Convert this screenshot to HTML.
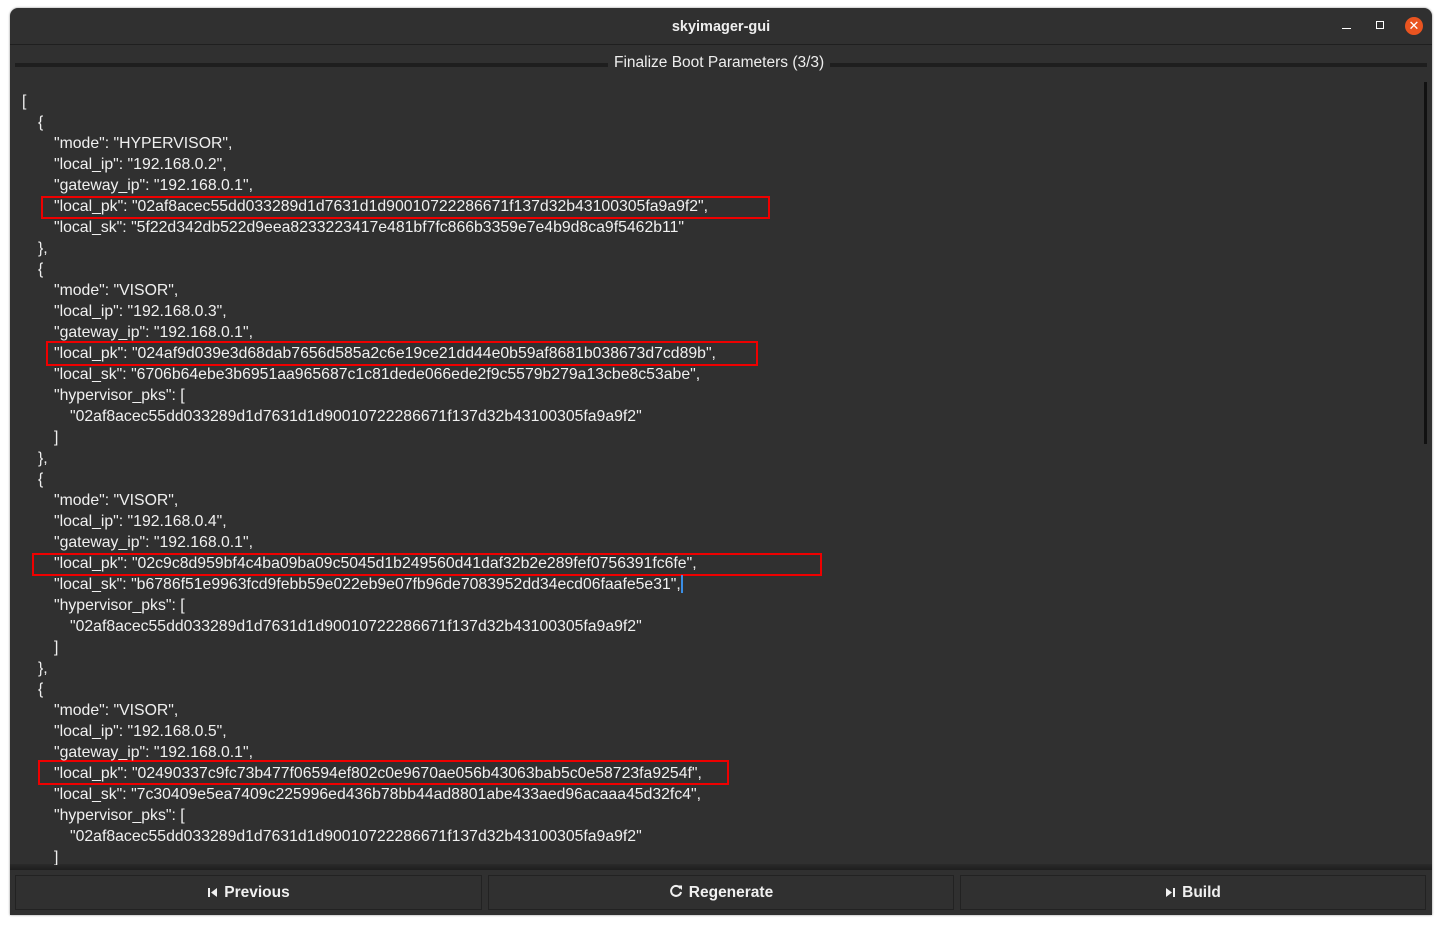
<!DOCTYPE html>
<html><head><meta charset="utf-8"><style>
html,body{margin:0;padding:0;width:1442px;height:925px;background:#fff;overflow:hidden;font-family:"Liberation Sans",sans-serif;}
.win{position:absolute;left:10px;top:8px;width:1422px;height:907px;background:#303030;border-radius:8px 8px 0 0;box-shadow:0 0 2px #888;overflow:hidden;}
.tb{position:absolute;left:0;top:0;width:1422px;height:36px;border-bottom:1px solid #1f1f1f;color:#eee;font-weight:bold;font-size:14.5px;text-align:center;line-height:38px;}
.grp{position:absolute;left:5px;top:55px;width:1412px;height:4px;background:#1e1e1e;}
.gt{position:absolute;left:598px;top:45px;padding:0 6px;background:#303030;color:#eee;font-size:15.5px;line-height:20px;}
.l{position:absolute;color:#f0f0f0;font-size:15.8px;white-space:pre;line-height:21px;}
.box{position:absolute;border:2px solid #e00;box-sizing:border-box;}
.btn{position:absolute;top:867px;height:35px;border:1px solid #222;box-sizing:border-box;color:#f0f0f0;font-weight:bold;font-size:15.5px;text-align:center;line-height:33px;}
.btn svg{vertical-align:-1px;margin-right:6px}
</style></head><body>
<div class="win">
<div class="tb">skyimager-gui</div>
<div style="position:absolute;left:1332px;top:20px;width:9px;height:1px;background:#fff"></div>
<div style="position:absolute;left:1366px;top:13px;width:6px;height:6px;border:1.5px solid #fff"></div>
<div style="position:absolute;left:1395px;top:9px;width:18px;height:18px;border-radius:50%;background:#e95420;color:#fff;font-size:13px;line-height:18px;text-align:center">✕</div>
<div class="grp"></div><div class="gt">Finalize Boot Parameters (3/3)</div>
<div style="position:absolute;left:1414px;top:74px;width:3px;height:362px;background:#111"></div>
<div style="position:absolute;left:0;top:856px;width:1422px;height:6px;background:linear-gradient(#2a2a2a,#1e1e1e)"></div>
<div class="btn" style="left:5px;width:467px"><svg width="11" height="11" viewBox="0 0 11 11"><rect x="1" y="1" width="2" height="9" fill="#f0f0f0"/><path d="M10 1L4 5.5L10 10Z" fill="#f0f0f0"/></svg>Previous</div>
<div class="btn" style="left:478px;width:466px"><svg width="14" height="14" viewBox="0 0 14 14"><path d="M11.5 4.5A5 5 0 1 0 12 8" fill="none" stroke="#f0f0f0" stroke-width="2"/><path d="M8.5 1.5L13 1.5L13 6Z" fill="#f0f0f0"/></svg>Regenerate</div>
<div class="btn" style="left:950px;width:466px"><svg width="11" height="11" viewBox="0 0 11 11"><path d="M1 1L7 5.5L1 10Z" fill="#f0f0f0"/><rect x="8" y="1" width="2" height="9" fill="#f0f0f0"/></svg>Build</div>
</div>
<div class="box" style="left:41px;top:196px;width:729px;height:23px"></div>
<div class="box" style="left:46px;top:341px;width:712px;height:25px"></div>
<div class="box" style="left:32px;top:553px;width:790px;height:23px"></div>
<div class="box" style="left:38px;top:760px;width:691px;height:25px"></div>
<div style="position:absolute;left:681px;top:575px;width:2px;height:18px;background:#3a8ee6"></div>
<div style="position:absolute;left:0;top:1px">
<div class="l" style="left:22px;top:90px">[</div>
<div class="l" style="left:38px;top:111px">{</div>
<div class="l" style="left:54px;top:132px">"mode": "HYPERVISOR",</div>
<div class="l" style="left:54px;top:153px">"local_ip": "192.168.0.2",</div>
<div class="l" style="left:54px;top:174px">"gateway_ip": "192.168.0.1",</div>
<div class="l" style="left:54px;top:195px">"local_pk": "02af8acec55dd033289d1d7631d1d90010722286671f137d32b43100305fa9a9f2",</div>
<div class="l" style="left:54px;top:216px">"local_sk": "5f22d342db522d9eea8233223417e481bf7fc866b3359e7e4b9d8ca9f5462b11"</div>
<div class="l" style="left:38px;top:237px">},</div>
<div class="l" style="left:38px;top:258px">{</div>
<div class="l" style="left:54px;top:279px">"mode": "VISOR",</div>
<div class="l" style="left:54px;top:300px">"local_ip": "192.168.0.3",</div>
<div class="l" style="left:54px;top:321px">"gateway_ip": "192.168.0.1",</div>
<div class="l" style="left:54px;top:342px">"local_pk": "024af9d039e3d68dab7656d585a2c6e19ce21dd44e0b59af8681b038673d7cd89b",</div>
<div class="l" style="left:54px;top:363px">"local_sk": "6706b64ebe3b6951aa965687c1c81dede066ede2f9c5579b279a13cbe8c53abe",</div>
<div class="l" style="left:54px;top:384px">"hypervisor_pks": [</div>
<div class="l" style="left:70px;top:405px">"02af8acec55dd033289d1d7631d1d90010722286671f137d32b43100305fa9a9f2"</div>
<div class="l" style="left:54px;top:426px">]</div>
<div class="l" style="left:38px;top:447px">},</div>
<div class="l" style="left:38px;top:468px">{</div>
<div class="l" style="left:54px;top:489px">"mode": "VISOR",</div>
<div class="l" style="left:54px;top:510px">"local_ip": "192.168.0.4",</div>
<div class="l" style="left:54px;top:531px">"gateway_ip": "192.168.0.1",</div>
<div class="l" style="left:54px;top:552px">"local_pk": "02c9c8d959bf4c4ba09ba09c5045d1b249560d41daf32b2e289fef0756391fc6fe",</div>
<div class="l" style="left:54px;top:573px">"local_sk": "b6786f51e9963fcd9febb59e022eb9e07fb96de7083952dd34ecd06faafe5e31",</div>
<div class="l" style="left:54px;top:594px">"hypervisor_pks": [</div>
<div class="l" style="left:70px;top:615px">"02af8acec55dd033289d1d7631d1d90010722286671f137d32b43100305fa9a9f2"</div>
<div class="l" style="left:54px;top:636px">]</div>
<div class="l" style="left:38px;top:657px">},</div>
<div class="l" style="left:38px;top:678px">{</div>
<div class="l" style="left:54px;top:699px">"mode": "VISOR",</div>
<div class="l" style="left:54px;top:720px">"local_ip": "192.168.0.5",</div>
<div class="l" style="left:54px;top:741px">"gateway_ip": "192.168.0.1",</div>
<div class="l" style="left:54px;top:762px">"local_pk": "02490337c9fc73b477f06594ef802c0e9670ae056b43063bab5c0e58723fa9254f",</div>
<div class="l" style="left:54px;top:783px">"local_sk": "7c30409e5ea7409c225996ed436b78bb44ad8801abe433aed96acaaa45d32fc4",</div>
<div class="l" style="left:54px;top:804px">"hypervisor_pks": [</div>
<div class="l" style="left:70px;top:825px">"02af8acec55dd033289d1d7631d1d90010722286671f137d32b43100305fa9a9f2"</div>
<div class="l" style="left:54px;top:846px;height:18px;overflow:hidden">]</div>
</div>
</body></html>
